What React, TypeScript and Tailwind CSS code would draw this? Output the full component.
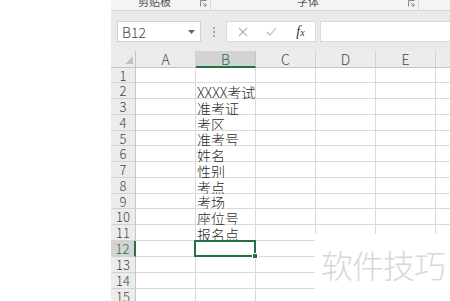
import React from "react";

const ROW_H = [15, 16, 16, 16, 15, 16, 16, 16, 15, 16, 16, 16, 16, 16, 16];
const B_TEXT: Record<number, string> = {
  2: "XXXX考试",
  3: "准考证",
  4: "考区",
  5: "准考号",
  6: "姓名",
  7: "性别",
  8: "考点",
  9: "考场",
  10: "座位号",
  11: "报名点",
};
const COLS = ["A", "B", "C", "D", "E"];
const FONT = { fontFamily: '"Noto Sans CJK SC", "Noto Sans", sans-serif' };

function Launcher() {
  return (
    <svg width="7" height="7" viewBox="0 0 7 7" className="block">
      <path d="M0.5 6.5 V0.5 H6.5" fill="none" stroke="#8a8a8a" strokeWidth="1" />
      <path d="M2.5 2.5 L6 6 M6 3.5 V6 H3.5" fill="none" stroke="#8a8a8a" strokeWidth="1" />
    </svg>
  );
}

function GridRow({ n, h }: { n: number; h: number }) {
  const sel = n === 12;
  const text = B_TEXT[n];
  return (
    <div className="flex shrink-0" style={{ height: h }}>
      <div
        className={
          "w-[25px] shrink-0 flex items-center justify-center text-[13px] leading-none font-light border-b border-[#d2d2d2] " +
          (sel
            ? "bg-[#d3d3d3] text-[#217346] border-r-2 border-r-[#217346]"
            : "bg-[#ececec] text-[#444] border-r border-r-[#c6c6c6]")
        }
      >
        {n}
      </div>
      {COLS.map((c) => (
        <div
          key={c}
          className="relative w-[60px] shrink-0 border-r border-b border-[#dadada] bg-white flex items-end"
        >
          {c === "B" && text ? (
            <span className="pl-[1px] text-[14px] leading-[14px] font-light text-[#2a2a2a] whitespace-nowrap translate-y-[1px]">
              {text}
            </span>
          ) : null}
          {c === "B" && sel ? (
            <div className="absolute -left-[2px] -top-[1px] -right-[1px] -bottom-[1px] border-2 border-[#217346] z-10">
              <div className="absolute -right-[4px] -bottom-[4px] w-[6px] h-[6px] bg-[#217346] border border-white" />
            </div>
          ) : null}
        </div>
      ))}
      <div className="flex-1 border-b border-[#dadada] bg-white" />
    </div>
  );
}

export default function App() {
  return (
    <div className="relative w-[450px] h-[301px] overflow-hidden bg-white flex" style={FONT}>
      <div className="w-[111px] shrink-0 bg-white" />
      <div className="flex-1 min-w-0 flex flex-col">
        {/* ribbon group labels */}
        <div className="h-[11px] shrink-0 bg-[#f4f4f4] border-b border-[#d8d8d8] flex items-end overflow-hidden text-[11px] leading-[11px] text-[#555]">
          <div className="w-[89px] shrink-0 pl-[27px] mb-[3px] whitespace-nowrap">剪贴板</div>
          <div className="w-[7px] shrink-0 mb-[3px]">
            <Launcher />
          </div>
          <div className="w-[1px] h-[10px] ml-[3px] shrink-0 bg-[#dcdcdc]" />
          <div className="w-[86px] shrink-0" />
          <div className="w-[111px] shrink-0 mb-[3px] whitespace-nowrap">字体</div>
          <div className="w-[7px] shrink-0 mb-[3px]">
            <Launcher />
          </div>
          <div className="w-[1px] h-[10px] ml-[3px] shrink-0 bg-[#dcdcdc]" />
        </div>
        {/* formula bar */}
        <div className="h-[40px] shrink-0 bg-[#eaeaea] flex items-start pt-[10px]">
          <div className="ml-[6px] w-[84px] h-[21px] shrink-0 bg-white border border-[#d0d0d0] flex items-center justify-between pl-[4px] pr-[5px]">
            <span className="text-[14px] leading-none font-light text-[#444]">B12</span>
            <svg width="7" height="4" viewBox="0 0 7 4" className="block">
              <path d="M0 0 H7 L3.5 4 Z" fill="#666" />
            </svg>
          </div>
          <div className="w-[25px] h-[21px] shrink-0 flex flex-col items-center justify-center gap-[2px]">
            <div className="w-[2px] h-[2px] bg-[#a8a8a8]" />
            <div className="w-[2px] h-[2px] bg-[#a8a8a8]" />
            <div className="w-[2px] h-[2px] bg-[#a8a8a8]" />
          </div>
          <div className="w-[90px] h-[21px] shrink-0 bg-white border border-[#dadada] flex items-center">
            <div className="w-[29px] shrink-0 flex justify-center pl-[2px]">
              <svg width="10" height="10" viewBox="0 0 10 10" className="block">
                <path d="M1 1 L9 9 M9 1 L1 9" stroke="#b4b4b4" strokeWidth="1.1" fill="none" />
              </svg>
            </div>
            <div className="w-[30px] shrink-0 flex justify-center">
              <svg width="11" height="9" viewBox="0 0 11 9" className="block">
                <path d="M1 5 L4 8 L10 1" stroke="#b4b4b4" strokeWidth="1.1" fill="none" />
              </svg>
            </div>
            <div className="w-[29px] shrink-0 flex justify-center">
              <span
                className="italic text-[14px] leading-none text-[#333]"
                style={{ fontFamily: '"Liberation Serif", serif' }}
              >
                f<span className="text-[10px]">x</span>
              </span>
            </div>
          </div>
          <div className="ml-[4px] flex-1 h-[21px] bg-white border border-[#dadada] border-r-0" />
        </div>
        {/* column headers */}
        <div className="h-[17px] shrink-0 flex bg-[#ececec]">
          <div className="w-[25px] shrink-0 border-r border-b border-[#c6c6c6] flex items-end justify-end pr-[2px] pb-[3px]">
            <svg width="8" height="8" viewBox="0 0 8 8" className="block">
              <path d="M8 0 V8 H0 Z" fill="#c4c4c4" />
            </svg>
          </div>
          {COLS.map((c) =>
            c === "B" ? (
              <div
                key={c}
                className="w-[60px] shrink-0 bg-[#d3d3d3] border-r border-[#c6c6c6] border-b-2 border-b-[#217346] flex items-center justify-center text-[14px] leading-none font-light text-[#217346]"
              >
                {c}
              </div>
            ) : (
              <div
                key={c}
                className="w-[60px] shrink-0 border-r border-b border-[#d0d0d0] border-b-[#c6c6c6] flex items-center justify-center text-[14px] leading-none font-light text-[#444]"
              >
                {c}
              </div>
            )
          )}
          <div className="flex-1 border-b border-[#c6c6c6]" />
        </div>
        {/* rows */}
        <div className="flex-1 flex flex-col overflow-hidden">
          {ROW_H.map((h, i) => (
            <GridRow key={i} n={i + 1} h={h} />
          ))}
        </div>
      </div>
      {/* watermark */}
      <div className="absolute left-[315px] top-[234px] right-0 bottom-0 bg-white z-20 pl-[6px] pt-[14px]">
        <span className="text-[32px] leading-[32px] font-light text-[#d8d8d8] whitespace-nowrap tracking-[-1px]">
          软件技巧
        </span>
      </div>
    </div>
  );
}
